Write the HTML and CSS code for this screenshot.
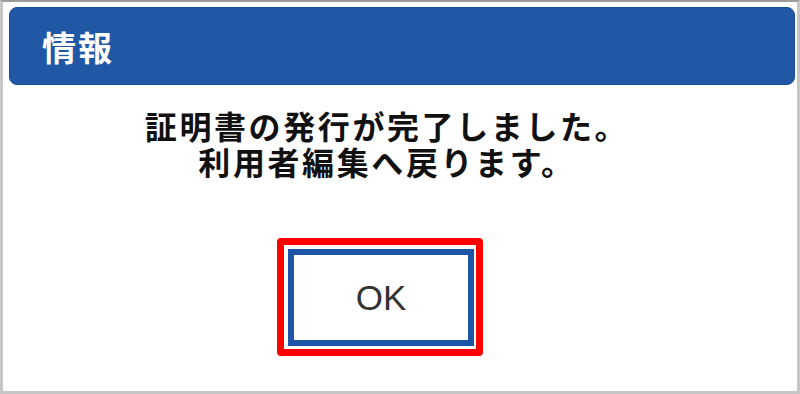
FILE: index.html
```html
<!DOCTYPE html>
<html lang="ja">
<head>
<meta charset="UTF-8">
<title>情報</title>
<link rel="stylesheet" href="styles.css">
</head>
<body>

<!-- 情報ダイアログ -->
<div class="dialog">
    <div class="dialog-header">情報</div>
    <div class="dialog-body">
        <p class="message">証明書の発行が完了しました。<br>利用者編集へ戻ります。</p>
        <div class="highlight">
            <button class="ok-button">OK</button>
        </div>
    </div>
</div>

</body>
</html>
```

FILE: styles.css
```css
body {
    margin: 0;
    background: #fff;
    font-family: "Noto Sans CJK JP", "Liberation Sans", sans-serif;
}

.dialog {
    width: 800px;
    height: 394px;
    box-sizing: border-box;
    border: 3px solid #c6c6c6;
    border-top: 2px solid #9c9c9c;
    background: #fff;
}

.dialog-header {
    margin: 5px 2px 0 6px;
    height: 78px;
    box-sizing: border-box;
    padding-left: 32px;
    display: flex;
    align-items: center;
    background: #2158a5;
    border: 1px solid #1a4e9b;
    border-radius: 8px;
    color: #fff;
    font-size: 34px;
    letter-spacing: 2px;
    font-weight: bold;
}

.dialog-body {
    display: flex;
    flex-direction: column;
    align-items: center;
    padding-right: 40px;
}

.message {
    margin: 22px 0 0;
    padding-left: 14px;
    text-align: center;
    font-size: 32px;
    letter-spacing: 2.6px;
    line-height: 36px;
    font-weight: bold;
    color: #111;
}

.highlight {
    margin-top: 59px;
    padding: 4px 2px 3px 4px;
    border: 7px solid #ff0000;
    border-radius: 4px;
}

.ok-button {
    display: block;
    width: 186px;
    height: 97px;
    border: 6px solid #1f55a6;
    background: #fff;
    color: #333;
    font-family: "Liberation Sans", Arial, sans-serif;
    font-size: 35px;
    cursor: pointer;
}
```
